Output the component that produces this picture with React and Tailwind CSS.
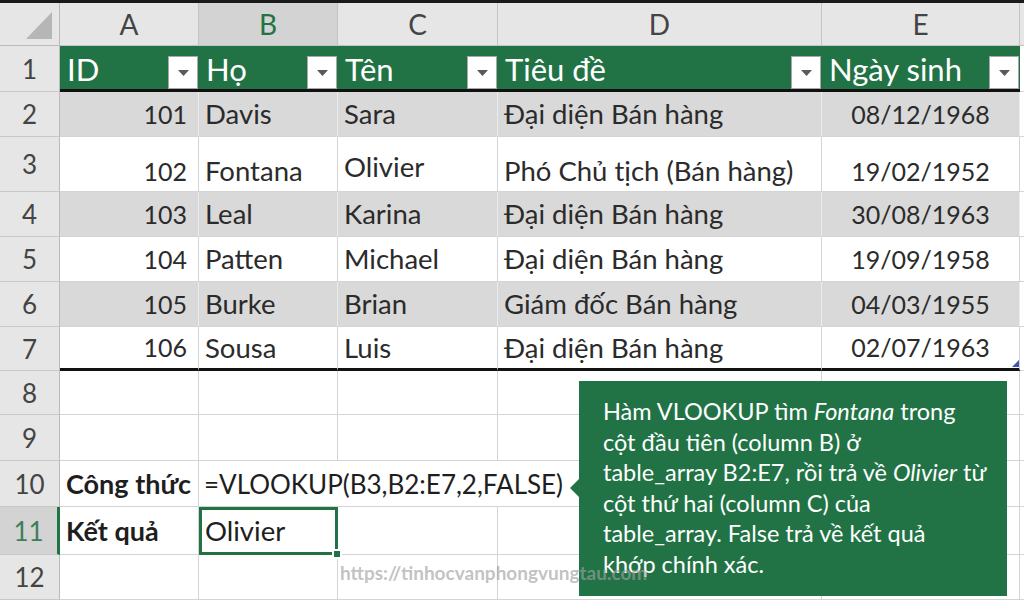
import React from "react";

const FONT = { fontFamily: "Lato, 'Noto Sans', sans-serif" };

function FilterBtn() {
  return (
    <div className="w-[30px] h-[33px] mr-[1px] self-end bg-white border border-[#a8a8a8] flex items-center justify-center shrink-0">
      <svg width="11" height="6" viewBox="0 0 11 6">
        <path d="M0 0 L11 0 L5.5 6 Z" fill="#5a5a5a" />
      </svg>
    </div>
  );
}

const rows = [
  { n: 2, h: "h-[45px]", band: true, c: ["101", "Davis", "Sara", "Đại diện Bán hàng", "08/12/1968"] },
  { n: 3, h: "h-[55px]", band: false, tall: true, c: ["102", "Fontana", "Olivier", "Phó Chủ tịch (Bán hàng)", "19/02/1952"] },
  { n: 4, h: "h-[45px]", band: true, c: ["103", "Leal", "Karina", "Đại diện Bán hàng", "30/08/1963"] },
  { n: 5, h: "h-[45px]", band: false, c: ["104", "Patten", "Michael", "Đại diện Bán hàng", "19/09/1958"] },
  { n: 6, h: "h-[45px]", band: true, c: ["105", "Burke", "Brian", "Giám đốc Bán hàng", "04/03/1955"] },
  { n: 7, h: "h-[44px]", band: false, last: true, c: ["106", "Sousa", "Luis", "Đại diện Bán hàng", "02/07/1963"] },
];

const widths = ["w-[139px]", "w-[139px]", "w-[160px]", "w-[324px]", "w-[198px]"];

function RowHead({ n, h, selected }) {
  return (
    <div
      className={`w-[60px] ${h} shrink-0 flex items-center justify-center text-[26px] leading-none border-b border-[#c8c8c8] ${
        selected
          ? "bg-[#d3d3d3] text-[#3d7f5a] border-r-[3px] border-r-[#217346]"
          : "bg-[#e6e6e6] text-[#444] border-r border-r-[#bababa]"
      }`}
    >
      {n}
    </div>
  );
}

function DataRow({ r }) {
  const vb = r.band ? "border-r-[#ececec]" : "border-r-[#d4d4d4]";
  const bb = r.last ? "border-b-[3px] border-b-[#111]" : "border-b border-b-[#d4d4d4]";
  const align = r.tall ? "items-end pb-[7px]" : "items-center";
  return (
    <div className="flex">
      <RowHead n={r.n} h={r.h} />
      {r.c.map((t, i) => (
        <div
          key={i}
          className={`${widths[i]} ${r.h} shrink-0 flex ${align} border-r ${vb} ${bb} ${
            r.band ? "bg-[#d9d9d9]" : "bg-white"
          } ${i === 0 || i === 4 ? "text-[25px]" : "text-[27.5px]"} leading-none text-[#2b2b2b] ${
            i === 0 ? "justify-end pr-[11px]" : i === 4 ? "justify-center relative" : "pl-[6px]"
          } ${r.tall && i === 2 ? "pb-[11px]" : ""}`}
        >
          {t}
          {r.last && i === 4 && (
            <svg className="absolute right-[0px] bottom-[1px]" width="7" height="7" viewBox="0 0 7 7">
              <path d="M7 0 L7 7 L0 7 Z" fill="#3d56b0" />
            </svg>
          )}
        </div>
      ))}
      <div className={`flex-1 ${r.h} bg-white border-b border-b-[#d4d4d4]`} />
    </div>
  );
}

function EmptyRow({ n, h, children, selected }) {
  return (
    <div className="flex">
      <RowHead n={n} h={h} selected={selected} />
      {children}
      <div className={`flex-1 ${h} bg-white border-b border-b-[#d4d4d4]`} />
    </div>
  );
}

const cellBase = "shrink-0 border-r border-b border-[#d4d4d4] bg-white";

export default function App() {
  const headers = ["ID", "Họ", "Tên", "Tiêu đề", "Ngày sinh"];
  const letters = ["A", "B", "C", "D", "E"];
  return (
    <div className="relative w-[1024px] h-[600px] overflow-hidden bg-white" style={FONT}>
      <div className="h-[3px] bg-[#1a1a1a]" />
      {/* column headers */}
      <div className="flex h-[43px]">
        <div className="w-[60px] shrink-0 bg-[#e6e6e6] border-r border-b border-[#bababa] flex items-end justify-end pr-[7px] pb-[6px]">
          <svg width="26" height="27" viewBox="0 0 26 27">
            <path d="M26 0 L26 27 L0 27 Z" fill="#b6b6b6" />
          </svg>
        </div>
        {letters.map((l, i) => (
          <div
            key={l}
            className={`${widths[i]} shrink-0 flex items-center justify-center text-[28px] leading-none border-r border-b border-[#c4c4c4] ${
              i === 1 ? "bg-[#d3d3d3] text-[#217346]" : "bg-[#e6e6e6] text-[#444]"
            }`}
          >
            {l}
          </div>
        ))}
        <div className="flex-1 bg-[#e6e6e6] border-b border-[#c4c4c4]" />
      </div>
      {/* header row 1 */}
      <div className="flex">
        <RowHead n={1} h="h-[46px]" />
        {headers.map((t, i) => (
          <div
            key={t}
            className={`${widths[i]} h-[46px] shrink-0 flex bg-[#217346] border-b-[3px] border-b-[#111]`}
          >
            <div className="flex-1 self-center pl-[7px] pt-[3px] text-[31px] leading-none text-white whitespace-nowrap">{t}</div>
            <FilterBtn />
          </div>
        ))}
        <div className="flex-1 h-[46px] bg-white border-b border-b-[#d4d4d4]" />
      </div>
      {rows.map((r) => (
        <DataRow key={r.n} r={r} />
      ))}
      <EmptyRow n={8} h="h-[44px]">
        {widths.map((w, i) => (
          <div key={i} className={`${w} h-[44px] ${cellBase}`} />
        ))}
      </EmptyRow>
      <EmptyRow n={9} h="h-[46px]">
        {widths.map((w, i) => (
          <div key={i} className={`${w} h-[46px] ${cellBase}`} />
        ))}
      </EmptyRow>
      <EmptyRow n={10} h="h-[46px]">
        <div className={`w-[139px] h-[46px] ${cellBase} flex items-center pl-[6px] text-[27px] font-bold leading-none text-[#1e1e1e] whitespace-nowrap`}>
          Công thức
        </div>
        <div className={`w-[623px] h-[46px] ${cellBase} flex items-center pl-[5px] text-[26px] leading-none text-[#1e1e1e] whitespace-nowrap`}>
          =VLOOKUP(B3,B2:E7,2,FALSE)
        </div>
        <div className={`w-[198px] h-[46px] ${cellBase}`} />
      </EmptyRow>
      <EmptyRow n={11} h="h-[48px]" selected>
        <div className={`w-[139px] h-[48px] ${cellBase} flex items-center pl-[6px] text-[27px] font-bold leading-none text-[#1e1e1e]`}>
          Kết quả
        </div>
        <div className="w-[139px] h-[48px] shrink-0 relative bg-white border-[3px] border-[#217346] flex items-center pl-[3px] text-[27.5px] leading-none text-[#1e1e1e]">
          Olivier
          <div className="absolute right-[-7px] bottom-[-7px] w-[10px] h-[10px] bg-[#217346] border-2 border-white" />
        </div>
        {widths.slice(2).map((w, i) => (
          <div key={i} className={`${w} h-[48px] ${cellBase}`} />
        ))}
      </EmptyRow>
      <EmptyRow n={12} h="h-[45px]">
        {widths.map((w, i) => (
          <div key={i} className={`${w} h-[45px] ${cellBase}`} />
        ))}
      </EmptyRow>

      {/* callout */}
      <div className="absolute left-[579px] top-[381px] w-[428px] h-[215px] bg-[#217346] px-[24px] pt-[15px] text-[23.5px] leading-[30.5px] text-white">
        <div className="absolute left-[-9px] top-[98px] w-0 h-0 border-y-[9px] border-y-transparent border-r-[9px] border-r-[#217346]" />
        <div className="whitespace-nowrap">
          Hàm VLOOKUP tìm <i>Fontana</i> trong
        </div>
        <div className="whitespace-nowrap">cột đầu tiên (column B) ở</div>
        <div className="whitespace-nowrap">
          table_array B2:E7, rồi trả về <i>Olivier</i> từ
        </div>
        <div className="whitespace-nowrap">cột thứ hai (column C) của</div>
        <div className="whitespace-nowrap">table_array. False trả về kết quả</div>
        <div className="whitespace-nowrap">khớp chính xác.</div>
      </div>

      {/* watermark (semi-transparent, over the sheet and callout) */}
      <div className="absolute left-[340px] top-[563px] text-[19px] font-bold leading-none text-[#a0a0a0]/65 whitespace-nowrap pointer-events-none">
        https://tinhocvanphongvungtau.com
      </div>
    </div>
  );
}
